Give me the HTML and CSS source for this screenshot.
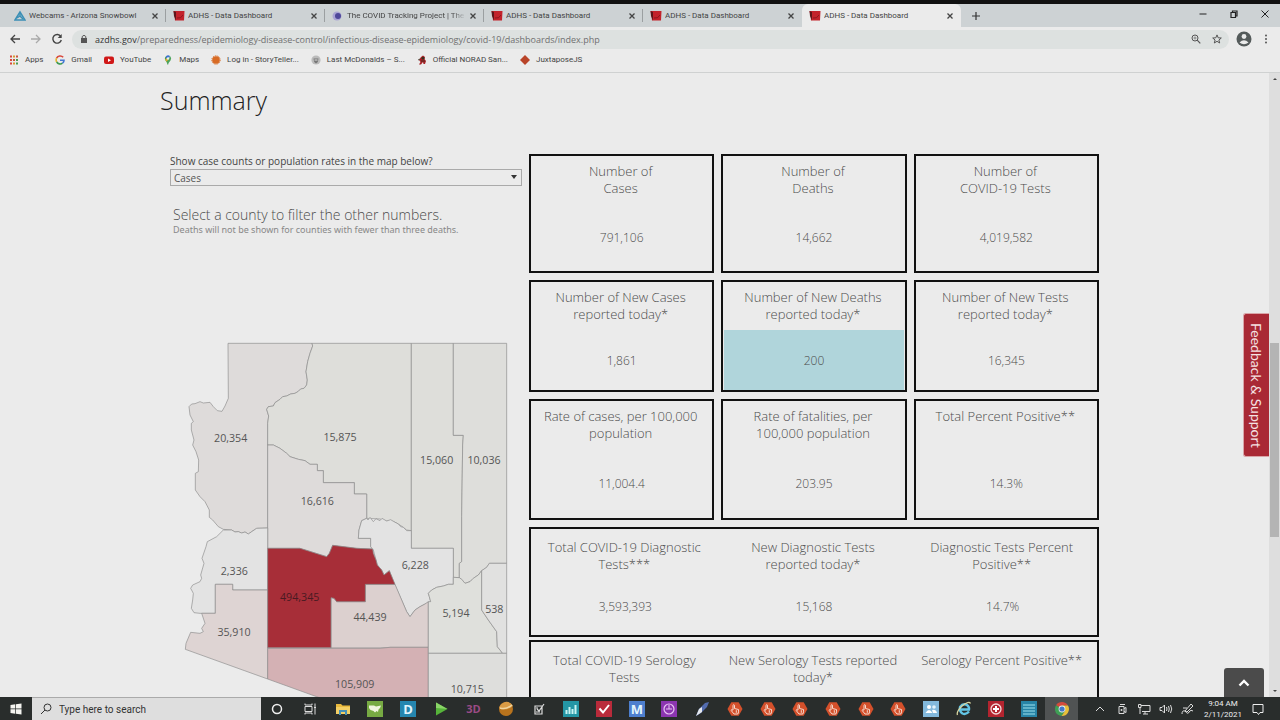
FILE: index.html
```html
<!DOCTYPE html>
<html lang="en">
<head>
    <meta charset="UTF-8">
    <meta name="viewport" content="width=device-width, initial-scale=1.0">
    <title>ADHS - Data Dashboard</title>
    <link rel="stylesheet" href="styles.css">
</head>
<body>

    <!-- Shared icon shapes -->
    <svg class="defs" aria-hidden="true">
        <symbol id="adhs" viewBox="0 0 12 12">
            <path d="M0.500 1H11.500L11 10.500H2L1.500 6Z" fill="#c3222b"/>
            <path d="M0.500 1L3 2V10.500L1 6Z" fill="#5d161a"/>
            <path d="M4 8Q8 9 10 5" stroke="#8d161d" stroke-width="1" fill="none"/>
        </symbol>
        <symbol id="close" viewBox="0 0 8 8">
            <path d="M1.500 1.500L6.500 6.500M6.500 1.500L1.500 6.500" stroke="#444" stroke-width="1.300"/>
        </symbol>
        <symbol id="hand" viewBox="0 0 16 16">
            <path d="M4.300 1.200H11.700L15.500 8L11.700 14.800H4.300L0.500 8Z" fill="#d4502b"/>
            <path d="M6 9V4.200Q6.800 3 7.500 4.200V7.500L11.500 8.500Q12 11 10.800 13H7L4 9.300Q4.500 8 6 9.300" fill="none" stroke="#f6d9cd" stroke-width="1"/>
            <path d="M9.300 9.200V11.800" stroke="#f6d9cd" stroke-width="1"/>
        </symbol>
    </svg>

    <!-- Tabs -->
    <header class="browser">
        <div class="tabs">
            <div class="tab">
                <svg class="tab-icon" viewBox="0 0 12 12"><path d="M1 10L6 2L11 10Z" fill="none" stroke="#3b8fb5" stroke-width="1.500"/><path d="M3 8L6 6L9 9M6 2V7" stroke="#3b8fb5" stroke-width="1.500" fill="none"/></svg>
                <span class="tab-title">Webcams - Arizona Snowbowl</span>
                <button class="tab-close" aria-label="Close tab"><svg><use href="#close"/></svg></button>
            </div>
            <div class="tab">
                <svg class="tab-icon"><use href="#adhs"/></svg>
                <span class="tab-title">ADHS - Data Dashboard</span>
                <button class="tab-close" aria-label="Close tab"><svg><use href="#close"/></svg></button>
            </div>
            <div class="tab">
                <svg class="tab-icon" viewBox="0 0 12 12"><circle cx="5" cy="6" r="4.500" fill="#aaa4d4"/><circle cx="6" cy="6" r="3" fill="#4f489a"/></svg>
                <span class="tab-title fade">The COVID Tracking Project | The</span>
                <button class="tab-close" aria-label="Close tab"><svg><use href="#close"/></svg></button>
            </div>
            <div class="tab">
                <svg class="tab-icon"><use href="#adhs"/></svg>
                <span class="tab-title">ADHS - Data Dashboard</span>
                <button class="tab-close" aria-label="Close tab"><svg><use href="#close"/></svg></button>
            </div>
            <div class="tab last">
                <svg class="tab-icon"><use href="#adhs"/></svg>
                <span class="tab-title">ADHS - Data Dashboard</span>
                <button class="tab-close" aria-label="Close tab"><svg><use href="#close"/></svg></button>
            </div>
            <div class="tab active">
                <svg class="tab-icon"><use href="#adhs"/></svg>
                <span class="tab-title">ADHS - Data Dashboard</span>
                <button class="tab-close" aria-label="Close tab"><svg><use href="#close"/></svg></button>
            </div>
            <button class="new-tab" aria-label="New tab"><svg viewBox="0 0 10 10"><path d="M5 1V9M1 5H9" stroke="#333" stroke-width="1.200"/></svg></button>
            <div class="window-buttons">
                <button aria-label="Minimize"><svg viewBox="0 0 10 10"><path d="M1.500 5H8.500" stroke="#222"/></svg></button>
                <button aria-label="Restore"><svg viewBox="0 0 10 10"><path d="M2 3.500H6.500V8.500H2ZM3.500 3V2H8V7H7" stroke="#222" stroke-width="1.200" fill="none"/></svg></button>
                <button aria-label="Close"><svg viewBox="0 0 10 10"><path d="M1.500 1.500L8.500 8.500M8.500 1.500L1.500 8.500" stroke="#222"/></svg></button>
            </div>
        </div>

        <!-- Address bar -->
        <div class="toolbar">
            <button class="nav" aria-label="Back"><svg viewBox="0 0 12 12"><path d="M11 6H2M6 2L2 6L6 10" stroke="#444" stroke-width="1.300" fill="none"/></svg></button>
            <button class="nav" aria-label="Forward"><svg viewBox="0 0 12 12"><path d="M1 6H10M6 2L10 6L6 10" stroke="#aaa" stroke-width="1.300" fill="none"/></svg></button>
            <button class="nav" aria-label="Reload"><svg viewBox="0 0 12 12"><path d="M9.800 3.500A4.300 4.300 0 1 0 10.300 7" stroke="#444" stroke-width="1.400" fill="none"/><path d="M10.700 1V5H6.700Z" fill="#444"/></svg></button>
            <div class="address">
                <svg class="lock" viewBox="0 0 8 10"><path d="M1 4H7V9H1Z" fill="#555"/><path d="M2.200 4V2.500Q4 0 5.800 2.500V4" fill="none" stroke="#555"/></svg>
                <p class="url"><span class="host">azdhs.gov</span>/preparedness/epidemiology-disease-control/infectious-disease-epidemiology/covid-19/dashboards/index.php</p>
                <button class="address-icon" aria-label="Zoom"><svg viewBox="0 0 10 10"><circle cx="4" cy="4" r="3" fill="none" stroke="#555"/><path d="M6.200 6.200L9.300 9.300" stroke="#555" stroke-width="1.200"/><path d="M2.500 4H5.500M4 2.500V5.500" stroke="#777" stroke-width="0.800"/></svg></button>
                <button class="address-icon" aria-label="Bookmark"><svg viewBox="0 0 10 10"><path d="M5 0.900L6.200 3.800L9.300 4L6.900 6L7.700 9L5 7.300L2.300 9L3.100 6L0.700 4L3.800 3.800Z" fill="none" stroke="#555"/></svg></button>
            </div>
            <button class="profile" aria-label="Profile"><svg viewBox="0 0 16 16"><circle cx="8" cy="8" r="7.500" fill="#555b5b"/><circle cx="8" cy="5.500" r="2.400" fill="#ebebeb"/><path d="M3.500 11.500Q8 7 12.500 11.500Q8 15 3.500 11.500" fill="#ebebeb"/></svg></button>
            <button class="menu" aria-label="Menu"><svg viewBox="0 0 4 12"><circle cx="2" cy="2.500" r="1" fill="#555"/><circle cx="2" cy="6" r="1" fill="#555"/><circle cx="2" cy="9.500" r="1" fill="#555"/></svg></button>
        </div>

        <!-- Bookmarks -->
        <nav class="bookmarks">
            <a href="#"><svg viewBox="0 0 10 10"><path d="M1 1.500H3M1 5H3M1 8.500H3" stroke="#d8483c" stroke-width="2"/><path d="M4 1.500H6M4 8.500H6" stroke="#d79b2e" stroke-width="2"/><path d="M7 1.500H9M4 5H6" stroke="#c9563f" stroke-width="2"/><path d="M7 5H9M7 8.500H9" stroke="#4c9b52" stroke-width="2"/></svg>Apps</a>
            <a href="#"><svg viewBox="0 0 10 10"><path d="M8.200 2.300A4 4 0 0 0 1.600 3.200" stroke="#d8483c" stroke-width="1.600" fill="none"/><path d="M1.600 3.200A4 4 0 0 0 1.700 7" stroke="#e2b32d" stroke-width="1.600" fill="none"/><path d="M1.700 7A4 4 0 0 0 7.500 8.200" stroke="#3c9950" stroke-width="1.600" fill="none"/><path d="M7.500 8.200Q9 7 9 5.200H5" stroke="#4478d4" stroke-width="1.600" fill="none"/></svg>Gmail</a>
            <a href="#"><svg viewBox="0 0 10 10"><rect x="0" y="1.500" width="10" height="7.500" rx="2" fill="#d01818"/><path d="M4 3.500L7 5.200L4 7Z" fill="#fff"/></svg>YouTube</a>
            <a href="#"><svg viewBox="0 0 10 10"><path d="M5 10Q4 7 2.500 5.500Q1 3 3 1.200L5 4Z" fill="#3f9c56"/><path d="M3 1.200Q5-0.500 7.200 1.200L3 5Z" fill="#3d73cf"/><path d="M7.200 1.200Q9 3 7.500 5.500Q5.700 7.300 5 10L3.500 6.500Z" fill="#4ca45c"/><path d="M2.100 4.500L4 3L5 5L3.500 6.800Z" fill="#e1ac2b"/><circle cx="5" cy="3.500" r="1.200" fill="#eee"/></svg>Maps</a>
            <a href="#"><svg viewBox="0 0 10 10"><circle cx="5" cy="5" r="3.800" fill="#d86b25"/><circle cx="5" cy="5" r="4.200" fill="none" stroke="#d86b25" stroke-dasharray="1.300 1"/></svg>Log in - StoryTeller...</a>
            <a href="#"><svg viewBox="0 0 10 10"><circle cx="5" cy="5" r="4.600" fill="#bbb"/><path d="M2.500 3.500H7.500L6.800 7L5 8.500L3.200 7Z" fill="#777"/><path d="M3.500 5H6.500" stroke="#ddd"/></svg>Last McDonalds – S...</a>
            <a href="#"><svg viewBox="0 0 10 10"><path d="M4 2L6 0.500L8 2L7.500 4L9 6L8 9H6.500L6 7L4 9.500H2L3.500 7L2 5Z" fill="#a82025"/><path d="M5 2.500H7V4H5ZM1 5L3 4M4 6H8" fill="#332" stroke="#332" stroke-width="0.800"/></svg>Official NORAD San...</a>
            <a href="#"><svg viewBox="0 0 10 10"><path d="M5 0L10 5L5 10L0 5Z" fill="#b94429"/></svg>JuxtaposeJS</a>
        </nav>
    </header>

    <main class="viewport">
        <div class="page">
            <div class="container">
                <h1>Summary</h1>

                <div class="dashboard">
                    <section class="map-panel">
                        <label for="measure">Show case counts or population rates in the map below?</label>
                        <div class="select-box">
                            <select id="measure">
                                <option>Cases</option>
                                <option>Rates</option>
                            </select>
                        </div>
                        <p class="hint">Select a county to filter the other numbers.</p>
                        <p class="note">Deaths will not be shown for counties with fewer than three deaths.</p>

                        <!-- Arizona counties -->
                        <svg class="map" viewBox="12 36 978 1140" role="img" aria-label="Cases by county">
                            <g class="counties">
                                <path fill="#dedbda" d="M144 40H396L398 48L390 70L383 95L378 125L382 150L380 165L372 175L362 177L355 184L345 190L332 192L320 198L308 200L300 208L285 218L280 228L265 230L260 238L266 258L263 280V594L230 595L215 605L205 612L195 606L185 609L175 605L165 606L155 600L130 598L115 590L98 570L88 562V540L75 515L60 500L46 480V430L55 425L56 390L48 365L38 345L42 330L34 300V280L40 275L30 255L27 230L35 222L45 221L60 215L70 219L90 217L100 230L112 242L126 244L135 228L145 205Z"/>
                                <path fill="#dededa" d="M396 40H694V602L680 600L670 592L655 582L640 574L620 573L600 567L560 565V492H523V458H430V422H412V403L390 403L375 392L355 388L330 380L320 370L300 355L280 345H263V280L266 258L260 238L265 230L280 228L285 218L300 208L308 200L320 198L332 192L345 190L355 184L362 177L372 175L380 165L382 150L378 125L383 95L390 70L398 48Z"/>
                                <path fill="#dededa" d="M694 40H820V316H850L848 345L845 560V695L838 700V743L820 742V655H694Z"/>
                                <path fill="#dededb" d="M820 40H980V700H928L920 712L905 722L895 735L880 745L870 755L855 760L845 748L838 743V700L845 695V560L848 345L850 316H820Z"/>
                                <path fill="#dedbda" d="M263 345H280L300 355L320 370L330 380L355 388L375 392L390 403H412V422H430V458H523V492H560V565L545 572L537 600L535 625H572V650L578 657L530 655L458 646L448 670L440 680L360 655H263Z"/>
                                <path fill="#e3e3e3" d="M560 565L564 570L570 562L580 575L588 566L600 572L606 565L620 573L632 569L640 574L655 582L662 590L670 592L680 602L694 602V655H820V763H805L790 768L770 772L755 780L745 790L748 800L752 815L735 822L720 830L705 840L690 860L680 845L645 765L628 722L612 735L605 720L592 705L588 690L580 660L572 650V625H535L537 600L545 572Z"/>
                                <path fill="#e3e3e3" d="M130 600L155 600L165 606L175 605L185 609L195 606L205 612L215 605L230 595L263 594V780H158V763H106V850H60L42 848L34 835L38 810L40 790L32 775L38 765L60 755L65 745L62 735L72 700L66 685L78 650L82 635L110 620Z"/>
                                <path fill="#ded4d3" d="M106 763H158V780H263V1047L16 958L18 940L32 907L60 910L70 905L65 895L75 880L65 850H106Z"/>
                                <path fill="#dcd0cf" d="M556 763H645L680 845L690 860L705 840L720 830L735 822L745 815V952H630L600 954H453V803L462 805L470 815H556Z"/>
                                <path fill="#d4b1b4" d="M263 955H600L630 952H745V1176H620L263 1047Z"/>
                                <path fill="#dfe0dc" d="M820 742L838 743L845 748L855 760L870 755L880 745L895 735L905 722V840L925 870L950 905L952 950L968 970H745V815L752 815L748 800L745 790L755 780L770 772L790 768L805 763H820Z"/>
                                <path fill="#e1e1e0" d="M905 722L920 712L928 700H980V970H968L952 950L950 905L925 870L905 840Z"/>
                                <path fill="#dededc" d="M745 970H980V1176H745Z"/>
                                <path fill="#a72e38" d="M263 655H360L440 680L448 670L458 646L530 655L578 657L580 670L588 690L592 705L605 720L612 735L628 722L645 763H556V815H470L462 805L453 803V953H263Z"/>
                            </g>
                            <g class="county-labels">
                                <text x="152" y="336">20,354</text>
                                <text x="480" y="333">15,875</text>
                                <text x="770" y="402">15,060</text>
                                <text x="912" y="403">10,036</text>
                                <text x="412" y="526">16,616</text>
                                <text x="706" y="718">6,228</text>
                                <text x="163" y="735">2,336</text>
                                <text class="on-red" x="359" y="814">494,345</text>
                                <text x="570" y="872">44,439</text>
                                <text x="162" y="918">35,910</text>
                                <text x="828" y="862">5,194</text>
                                <text x="943" y="848">538</text>
                                <text x="524" y="1074">105,909</text>
                                <text x="862" y="1088">10,715</text>
                            </g>
                        </svg>
                    </section>

                    <section class="cards">
                        <div class="row row-totals">
                            <div class="card"><h2>Number of<br>Cases</h2><p>791,106</p></div>
                            <div class="card"><h2>Number of<br>Deaths</h2><p>14,662</p></div>
                            <div class="card"><h2>Number of<br>COVID-19 Tests</h2><p>4,019,582</p></div>
                        </div>
                        <div class="row row-new">
                            <div class="card"><h2>Number of New Cases<br>reported today*</h2><p>1,861</p></div>
                            <div class="card"><h2>Number of New Deaths<br>reported today*</h2><p class="highlight">200</p></div>
                            <div class="card"><h2>Number of New Tests<br>reported today*</h2><p>16,345</p></div>
                        </div>
                        <div class="row row-rates">
                            <div class="card"><h2>Rate of cases, per 100,000<br>population</h2><p>11,004.4</p></div>
                            <div class="card"><h2>Rate of fatalities, per<br>100,000 population</h2><p>203.95</p></div>
                            <div class="card"><h2>Total Percent Positive**</h2><p>14.3%</p></div>
                        </div>
                        <div class="row group">
                            <div class="cell"><h2>Total COVID-19 Diagnostic<br>Tests***</h2><p>3,593,393</p></div>
                            <div class="cell"><h2>New Diagnostic Tests<br>reported today*</h2><p>15,168</p></div>
                            <div class="cell"><h2>Diagnostic Tests Percent<br>Positive**</h2><p>14.7%</p></div>
                        </div>
                        <div class="row group">
                            <div class="cell"><h2>Total COVID-19 Serology<br>Tests</h2></div>
                            <div class="cell"><h2>New Serology Tests reported<br>today*</h2></div>
                            <div class="cell"><h2>Serology Percent Positive**</h2></div>
                        </div>
                    </section>
                </div>
            </div>
            <button class="feedback">Feedback &amp; Support</button>
            <button class="to-top" aria-label="Back to top"><svg viewBox="0 0 12 8"><path d="M1.500 6.500L6 2L10.500 6.500" fill="none" stroke="#fff" stroke-width="2.400"/></svg></button>
        </div>
        <div class="scrollbar">
            <svg viewBox="0 0 6 4"><path d="M1 3L3 1L5 3Z" fill="#444"/></svg>
            <div class="thumb"></div>
            <svg viewBox="0 0 6 4"><path d="M1 1L3 3L5 1Z" fill="#444"/></svg>
        </div>
    </main>

    <!-- Windows taskbar -->
    <footer class="taskbar">
        <button class="start" aria-label="Start"><svg viewBox="0 0 12 12"><path d="M0.500 2L5.300 1.300V5.600H0.500ZM6 1.200L11.500 0.500V5.600H6ZM0.500 6.300H5.300V10.700L0.500 10ZM6 6.300H11.500V11.500L6 10.800Z" fill="#f4f4f0"/></svg></button>
        <div class="search">
            <svg viewBox="0 0 12 12"><circle cx="7.500" cy="4.500" r="3.500" fill="none" stroke="#333"/><path d="M5 7L1 11" stroke="#333"/></svg>
            <input type="text" aria-label="Search" placeholder="Type here to search">
        </div>
        <div class="apps">
            <button aria-label="Cortana"><svg viewBox="0 0 16 16"><circle cx="8" cy="8" r="4.500" fill="none" stroke="#eee" stroke-width="1.500"/></svg></button>
            <button aria-label="Task view"><svg viewBox="0 0 16 16"><path d="M3 5.500H10V10.500H3ZM3 2.500V4H10V2.500M3 13.500V12H10V13.500M13 2.500V5M13 8V13.500" fill="none" stroke="#ddd"/><path d="M12 5.500H14V7.500H12Z" fill="#ddd"/></svg></button>
            <button aria-label="File Explorer"><svg viewBox="0 0 16 16"><path d="M1 3H6L7.500 4.500H15V13H1Z" fill="#e9b93d"/><path d="M1 6H15V13H1Z" fill="#f3cf65"/><path d="M4 14V9H12V14H10V11H6V14Z" fill="#4790b5"/></svg></button>
            <button aria-label="Maps"><svg viewBox="0 0 16 16"><path d="M0 0H16V16H0Z" fill="#77aa43"/><path d="M2 4.500H7L9 5.500L14 4.500L13 7L11.500 8.500L11 11L9.500 10L8 11.500L6.500 10L3.500 9L2 7Z" fill="#f0f4df"/></svg></button>
            <button class="letter teal" aria-label="Desktop app"><span>D</span></button>
            <button aria-label="Play"><svg viewBox="0 0 16 16"><path d="M3 1.500L14.500 8L3 14.500Z" fill="#56b43a"/><path d="M3 1.500L14.500 8L3 7Z" fill="#8ad568"/></svg></button>
            <button class="word" aria-label="3D app"><span>3D</span></button>
            <button aria-label="Globe"><svg viewBox="0 0 16 16"><circle cx="8" cy="8" r="7" fill="#b8731d"/><path d="M1 7Q7 11 15 5Q12 0 7 1Q2 3 1 7Z" fill="#d99b45"/><path d="M2 7Q8 9 14 4" stroke="#f0d5a0" stroke-width="1.500" fill="none"/></svg></button>
            <button aria-label="Checklist"><svg viewBox="0 0 16 16"><path d="M4 5H11V13H4ZM6 8L8 10L13 3M5 7H7M5 11H9" fill="none" stroke="#ddd" stroke-width="1.200"/></svg></button>
            <button aria-label="Charts"><svg viewBox="0 0 16 16"><path d="M0 0H16V16H0Z" fill="#2496a5"/><path d="M3.500 13V9M6.500 13V6M9.500 13V8M12.500 13V4" stroke="#c9f3f2" stroke-width="2"/></svg></button>
            <button aria-label="Tasks"><svg viewBox="0 0 16 16"><path d="M0 0H16V16H0Z" fill="#b92b3b"/><path d="M3.500 7.500L7 11.500L13 4" fill="none" stroke="#fff" stroke-width="2"/></svg></button>
            <button class="letter blue" aria-label="Mail app"><span>M</span></button>
            <button aria-label="Clock"><svg viewBox="0 0 16 16"><path d="M0 0H16V16H0Z" fill="#8b35b0"/><circle cx="8" cy="8" r="5" fill="none" stroke="#e7c3f2" stroke-width="1.200"/><path d="M8 4V8H11M5 8H8" stroke="#e7c3f2" fill="none"/></svg></button>
            <button aria-label="Pen"><svg viewBox="0 0 16 16"><path d="M2 15L5 8L11 2L15 1L13 6L7 12Z" fill="#536cae"/><path d="M2 15L5 8L8 6L8 11Z" fill="#e5e8ed"/></svg></button>
            <button aria-label="Touch 1"><svg><use href="#hand"/></svg></button>
            <button aria-label="Touch 2"><svg><use href="#hand"/></svg></button>
            <button aria-label="Touch 3"><svg><use href="#hand"/></svg></button>
            <button aria-label="Touch 4"><svg><use href="#hand"/></svg></button>
            <button aria-label="Touch 5"><svg><use href="#hand"/></svg></button>
            <button aria-label="Touch 6"><svg><use href="#hand"/></svg></button>
            <button aria-label="People"><svg viewBox="0 0 16 16"><path d="M0 0H16V16H0Z" fill="#83b9dc"/><circle cx="6" cy="6" r="2" fill="#fff"/><circle cx="11" cy="6" r="1.800" fill="#e3f2fa"/><path d="M2.500 12Q6 6 9.500 12ZM9 9Q13 8 14 12H10Z" fill="#fff"/></svg></button>
            <button aria-label="Internet Explorer"><svg viewBox="0 0 16 16"><path d="M13 10.500Q10 14 6.500 12.500Q3 10 4 6Q7 2 11 4Q13.500 6 13 8.500H5" fill="none" stroke="#63c5e5" stroke-width="2.400"/><path d="M1.500 14Q0 11 6 5Q13-0.500 14.500 2.500" fill="none" stroke="#d8d6a0" stroke-width="1.300"/></svg></button>
            <button aria-label="Target"><svg viewBox="0 0 16 16"><path d="M0 0H16V16H0Z" fill="#b3242f"/><circle cx="8" cy="8" r="5" fill="none" stroke="#f3d8d8" stroke-width="1.300"/><path d="M8 5V11M5 8H11" stroke="#fff" stroke-width="2"/></svg></button>
            <button aria-label="List"><svg viewBox="0 0 16 16"><path d="M0 0H16V16H0Z" fill="#2784a6"/><path d="M2 4H14M2 7H14M2 10H14M2 13H14" stroke="#9ee1ee" stroke-width="1.200"/></svg></button>
            <button class="running" aria-label="Chrome"><svg viewBox="0 0 16 16"><path d="M8 8L2 4.300A7 7 0 0 1 14 4.500H8Z" fill="#d54a3c"/><path d="M8 8L2 4.300A7 7 0 0 0 7.500 15L11 10Z" fill="#3f9f55"/><path d="M8 4.500H14A7 7 0 0 1 7.500 15L11 10Z" fill="#e7bf39"/><circle cx="8" cy="8" r="3.400" fill="#eee"/><circle cx="8" cy="8" r="2.600" fill="#4478c7"/></svg></button>
        </div>
        <div class="tray">
            <svg viewBox="0 0 14 14"><path d="M3 9L7 5L11 9" fill="none" stroke="#ddd"/></svg>
            <svg viewBox="0 0 14 14"><path d="M4 4.500H9V11.500H4ZM5 2.500H10M9 6.500L11 5.500V10.500L9 9.500" fill="none" stroke="#ddd"/><circle cx="6.500" cy="8" r="1" fill="#ddd"/></svg>
            <svg viewBox="0 0 14 14"><path d="M4 3.500H13V9.500H5M8 9.500V12M6 12H11M1.500 2.500H4V5.500H1.500ZM3 5.500V12" fill="none" stroke="#ddd"/></svg>
            <svg viewBox="0 0 14 14"><path d="M1 5.500H3L5.500 3V11L3 8.500H1ZM7.500 5Q8.500 7 7.500 9M9.500 4Q11 7 9.500 10M11.500 3Q14 7 11.500 11" fill="none" stroke="#ddd"/></svg>
            <svg viewBox="0 0 14 14"><path d="M4 9L10 2L12 4L6 10ZM1 12Q1 8 4 9Q7 13 8 10Q10 7 12 9M2 6H6" fill="none" stroke="#ddd"/></svg>
            <p class="clock">9:04 AM<br>2/11/2021</p>
            <svg viewBox="0 0 14 14"><path d="M2 2.500H12V10.500H9L7.500 12.500L6 10.500H2Z" fill="none" stroke="#eee"/></svg>
        </div>
    </footer>

</body>
</html>
```
FILE: styles.css
```css
* {
    box-sizing: border-box;
}
body {
    margin: 0;
    height: 100vh;
    display: flex;
    flex-direction: column;
    overflow: hidden;
    background-color: #ebebeb;
    color: #4c4c4c;
    font-family: 'Open Sans', 'Noto Sans', sans-serif;
}
h1, h2, p {
    margin: 0;
    font-weight: 300;
}
button {
    display: flex;
    align-items: center;
    justify-content: center;
    padding: 0;
    border: none;
    background: none;
    font-family: inherit;
    cursor: pointer;
}
svg {
    display: block;
    flex-shrink: 0;
}
.defs {
    position: absolute;
    width: 0;
    height: 0;
}

/* Browser chrome */
.browser {
    flex-shrink: 0;
    border-top: 4px solid #111;
    border-bottom: 1px solid #cfd1d1;
}
.tabs {
    display: flex;
    height: 23px;
    padding-left: 7px;
    background-color: #cdd2d4;
}
.tab {
    display: flex;
    align-items: center;
    gap: 3px;
    width: 159px;
    padding: 0 7px 0 7px;
    position: relative;
}
.tab::after {
    content: "";
    position: absolute;
    right: 0;
    top: 5px;
    height: 13px;
    border-right: 1px solid #9b9fa1;
}
.tab.last::after, .tab.active::after {
    display: none;
}
.tab.active {
    background-color: #ebebeb;
    border-radius: 6px 6px 0 0;
}
.tab-icon {
    width: 12px;
    height: 12px;
}
.tab-title {
    flex: 1;
    overflow: hidden;
    white-space: nowrap;
    font-family: Roboto, sans-serif;
    font-size: 8px;
    line-height: 12px;
    color: #444;
}
.tab-title.fade {
    -webkit-mask-image: linear-gradient(to right, #000 88%, transparent);
    mask-image: linear-gradient(to right, #000 88%, transparent);
}
.tab-close svg {
    width: 8px;
    height: 8px;
}
.new-tab {
    width: 30px;
}
.new-tab svg, .window-buttons svg {
    width: 10px;
    height: 10px;
}
.window-buttons {
    display: flex;
    margin-left: auto;
    height: 19px;
}
.window-buttons button {
    width: 31px;
}
.toolbar {
    display: flex;
    align-items: center;
    height: 24px;
    padding: 0 12px 0 4px;
}
.nav {
    width: 21px;
}
.nav svg {
    width: 12px;
    height: 12px;
}
.address {
    flex: 1;
    display: flex;
    align-items: center;
    height: 19px;
    margin-left: 5px;
    padding: 0 2px 0 8px;
    border-radius: 10px;
    background-color: #dde1e0;
}
.lock {
    width: 8px;
    height: 10px;
}
.url {
    flex: 1;
    margin-left: 7px;
    font-size: 9px;
    font-weight: 400;
    line-height: 13px;
    color: #707070;
}
.host {
    color: #333;
}
.address-icon {
    width: 21px;
}
.address-icon svg {
    width: 10px;
    height: 10px;
}
.profile {
    margin-left: 7px;
}
.profile svg {
    width: 16px;
    height: 16px;
}
.menu {
    margin-left: 12px;
}
.menu svg {
    width: 4px;
    height: 12px;
}
.bookmarks {
    display: flex;
    align-items: center;
    gap: 12px;
    height: 21px;
    padding: 0 9px 3px;
}
.bookmarks a {
    display: flex;
    align-items: center;
    gap: 6px;
    font-family: Roboto, sans-serif;
    font-size: 8px;
    line-height: 12px;
    color: #444;
    text-decoration: none;
}
.bookmarks svg {
    width: 10px;
    height: 10px;
}

/* Page */
.viewport {
    flex: 1;
    display: flex;
    min-height: 0;
}
.page {
    flex: 1;
    position: relative;
    overflow: hidden;
}
.container {
    max-width: 949px;
    margin: 0 auto;
    padding-right: 10px;
}
h1 {
    padding-top: 9px;
    font-size: 25px;
    line-height: 36px;
    color: #222;
}
.dashboard {
    display: flex;
    justify-content: space-between;
    margin-top: 36px;
}
.map-panel {
    width: 352px;
    margin-left: 10px;
}
.map-panel label {
    display: block;
    font-size: 10px;
    line-height: 14px;
    color: #444;
}
.select-box {
    position: relative;
    margin-top: 1px;
}
.select-box::after {
    content: "";
    position: absolute;
    right: 5px;
    top: 6px;
    border: 3px solid transparent;
    border-top: 4px solid #333;
    border-bottom: none;
}
select {
    appearance: none;
    display: block;
    width: 100%;
    height: 17px;
    padding: 0 3px;
    border: 1px solid #aaa;
    border-radius: 0;
    background: none;
    font-family: inherit;
    font-size: 10px;
    color: #555;
}
.hint {
    margin: 20px 0 0 3px;
    font-size: 14px;
    line-height: 18px;
}
.note {
    margin-left: 3px;
    font-family: 'Noto Sans', sans-serif;
    font-size: 9px;
    font-weight: 400;
    line-height: 12px;
    color: #888;
}
.map {
    width: 326px;
    height: 380px;
    margin: 106px 0 0 14px;
}
.counties path {
    stroke: #8c8c8c;
    stroke-width: 2;
}
.county-labels text {
    font-size: 32px;
    text-anchor: middle;
    fill: #555;
}
.county-labels .on-red {
    fill: #4a1a22;
}

/* Number cards */
.cards {
    width: 570px;
}
.row {
    display: grid;
    grid-template-columns: repeat(3, 1fr);
    gap: 7px;
    margin-bottom: 7px;
}
.card, .group {
    border: 2px solid #111;
}
.card, .cell {
    display: flex;
    flex-direction: column;
}
.row-totals {
    height: 119px;
}
.row-new {
    height: 112px;
}
.row-rates {
    height: 121px;
}
.group {
    height: 110px;
    gap: 0;
    margin-bottom: 3px;
}
h2 {
    height: 48px;
    padding: 7px 2px 0 0;
    font-size: 13px;
    line-height: 17px;
    text-align: center;
    white-space: nowrap;
}
.group h2 {
    padding-top: 10px;
}
.card p, .cell p {
    flex: 1;
    display: flex;
    align-items: center;
    justify-content: center;
    font-size: 12px;
}
.card .highlight {
    margin: 0 1px;
    background-color: #b0d5db;
}

.feedback {
    position: absolute;
    right: 0;
    top: 240px;
    width: 26px;
    height: 144px;
    border: 1px solid #d9a5a8;
    border-right: none;
    border-radius: 3px 0 0 3px;
    background-color: #a92935;
    color: #f5e3e3;
    font-family: Lato, sans-serif;
    font-size: 14px;
    writing-mode: vertical-rl;
}
.to-top {
    position: absolute;
    right: 5px;
    bottom: 0;
    width: 40px;
    height: 29px;
    border-radius: 3px 3px 0 0;
    background-color: #4b4b4b;
}
.to-top svg {
    width: 12px;
    height: 8px;
}
.scrollbar {
    display: flex;
    flex-direction: column;
    align-items: center;
    width: 11px;
    padding: 4px 1px;
    background-color: #dedede;
}
.scrollbar svg {
    width: 6px;
    height: 4px;
}
.thumb {
    width: 9px;
    height: 194px;
    margin: 262px 0 auto;
    background-color: #b4b4b4;
}

/* Taskbar */
.taskbar {
    flex-shrink: 0;
    display: flex;
    height: 23px;
    background-color: #292d2c;
}
.start {
    width: 32px;
}
.start svg {
    width: 12px;
    height: 12px;
}
.search {
    display: flex;
    align-items: center;
    gap: 7px;
    width: 229px;
    padding-left: 8px;
    border-top: 1px solid #aaa;
    background-color: #dedede;
}
.search svg {
    width: 12px;
    height: 12px;
}
.search input {
    width: 150px;
    padding: 0;
    border: none;
    outline: none;
    background: none;
    font-family: Roboto, sans-serif;
    font-size: 10px;
}
.search input::placeholder {
    color: #333;
}
.apps {
    flex: 1;
    display: grid;
    grid-template-columns: repeat(25, 1fr);
}
.apps svg {
    width: 16px;
    height: 16px;
}
.apps .running {
    background-color: #505353;
}
.letter span {
    width: 16px;
    background-color: #2586af;
    color: #e3f5fb;
    font-size: 13px;
    font-weight: 700;
    line-height: 16px;
}
.letter.blue span {
    background-color: #4d7fce;
}
.word span {
    color: #9b4b85;
    font-size: 11px;
    font-weight: 700;
}
.tray {
    display: flex;
    align-items: center;
    gap: 8px;
    width: 202px;
    padding-left: 15px;
}
.tray svg {
    width: 14px;
    height: 14px;
}
.clock {
    width: 40px;
    font-family: Roboto, sans-serif;
    font-size: 8px;
    font-weight: 400;
    line-height: 11px;
    text-align: center;
    color: #eee;
}
```
